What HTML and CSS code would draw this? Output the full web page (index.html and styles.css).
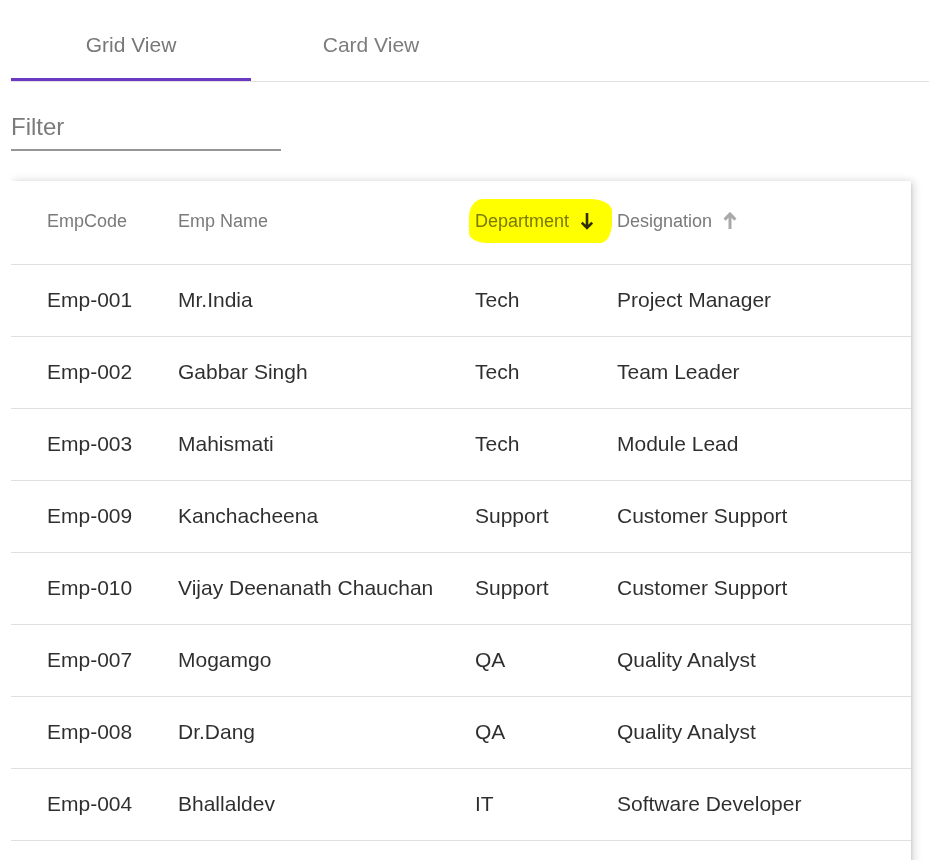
FILE: index.html
```html
<!DOCTYPE html>
<html lang="en">
<head>
<meta charset="utf-8">
<title>Employees</title>
<link rel="stylesheet" href="styles.css">
</head>
<body>
<div class="page">
  <div class="tabs">
    <div class="tab active">Grid View</div>
    <div class="tab">Card View</div>
  </div>

  <input class="filter" type="text" placeholder="Filter">

  <div class="table-wrap">
    <div class="table">
      <div class="row header-row">
        <div class="hcell">EmpCode</div>
        <div class="hcell">Emp Name</div>
        <div class="hcell sortable sorted">
          <span class="highlight"></span>
          Department
          <svg class="arrow" viewBox="0 0 14 18" width="14" height="18"><path d="M7 1V16M1.8 10.6L7 16L12.2 10.6" fill="none" stroke="currentColor" stroke-width="2.6"/></svg>
        </div>
        <div class="hcell sortable">
          Designation
          <svg class="arrow up" viewBox="0 0 14 18" width="14" height="18"><path d="M7 17V2M1.6 7.6L7 2L12.4 7.6" fill="none" stroke="currentColor" stroke-width="3"/></svg>
        </div>
      </div>

      <div class="row"><div>Emp-001</div><div>Mr.India</div><div>Tech</div><div>Project Manager</div></div>
      <div class="row"><div>Emp-002</div><div>Gabbar Singh</div><div>Tech</div><div>Team Leader</div></div>
      <div class="row"><div>Emp-003</div><div>Mahismati</div><div>Tech</div><div>Module Lead</div></div>
      <div class="row"><div>Emp-009</div><div>Kanchacheena</div><div>Support</div><div>Customer Support</div></div>
      <div class="row"><div>Emp-010</div><div>Vijay Deenanath Chauchan</div><div>Support</div><div>Customer Support</div></div>
      <div class="row"><div>Emp-007</div><div>Mogamgo</div><div>QA</div><div>Quality Analyst</div></div>
      <div class="row"><div>Emp-008</div><div>Dr.Dang</div><div>QA</div><div>Quality Analyst</div></div>
      <div class="row"><div>Emp-004</div><div>Bhallaldev</div><div>IT</div><div>Software Developer</div></div>
      <div class="row empty"><div></div><div></div><div></div><div></div></div>
    </div>
  </div>
</div>
</body>
</html>
```

FILE: styles.css
```css
html, body {
  margin: 0;
  padding: 0;
  background: #ffffff;
}

body {
  font-family: "Liberation Sans", Arial, sans-serif;
  color: rgba(0, 0, 0, 0.87);
  overflow: hidden;
}

.page {
  padding: 9px 0 0 11px;
}

.tabs {
  display: flex;
  border-bottom: 1px solid #e0e0e0;
}

.tab {
  box-sizing: border-box;
  width: 240px;
  height: 72px;
  display: flex;
  align-items: center;
  justify-content: center;
  font-size: 21px;
  color: #7d7d7d;
  padding-top: 2px;
  border-bottom: 3px solid transparent;
}

.tab.active {
  border-bottom-color: #6a3ac0;
  color: #787878;
}

.filter {
  display: block;
  box-sizing: content-box;
  width: 270px;
  height: 28px;
  margin: 31px 0 0 0;
  padding: 0 0 8px 0;
  border: none;
  border-bottom: 2px solid #969696;
  outline: none;
  font-family: "Liberation Sans", Arial, sans-serif;
  font-size: 24px;
  line-height: 28px;
  color: #212121;
  background: transparent;
}

.filter::placeholder {
  color: #7b7b7b;
  opacity: 1;
}

.table-wrap {
  overflow: hidden;
  margin-top: 18px;
  padding: 12px 24px 0 0;
}

.table {
  width: 900px;
  background: #ffffff;
  box-shadow: 0 2px 3px rgba(0, 0, 0, 0.14), 0 1px 10px rgba(0, 0, 0, 0.12), 4px 0 8px rgba(0, 0, 0, 0.07);
}

.row {
  box-sizing: border-box;
  display: grid;
  grid-template-columns: 131px 297px 142px 1fr;
  align-items: center;
  height: 72px;
  padding: 0 36px 2px;
  border-bottom: 1px solid #e0e0e0;
  font-size: 21px;
  line-height: 24px;
  color: rgba(0, 0, 0, 0.82);
}

.row.empty {
  border-bottom: none;
}

.header-row {
  height: 84px;
  padding-bottom: 4px;
  font-size: 18px;
  color: #7a7a7a;
}

.hcell {
  display: flex;
  align-items: center;
  line-height: 24px;
}

.sorted {
  position: relative;
}

.highlight {
  position: absolute;
  left: -6px;
  top: -10px;
  width: 143px;
  height: 44px;
  background: #ffff00;
  border-radius: 14px 22px 12px 18px / 18px 12px 20px 10px;
  mix-blend-mode: multiply;
  pointer-events: none;
}

.arrow {
  margin-left: 11px;
  color: #2e2e2e;
  flex: none;
}

.arrow.up {
  color: #a9a9a9;
}
```
